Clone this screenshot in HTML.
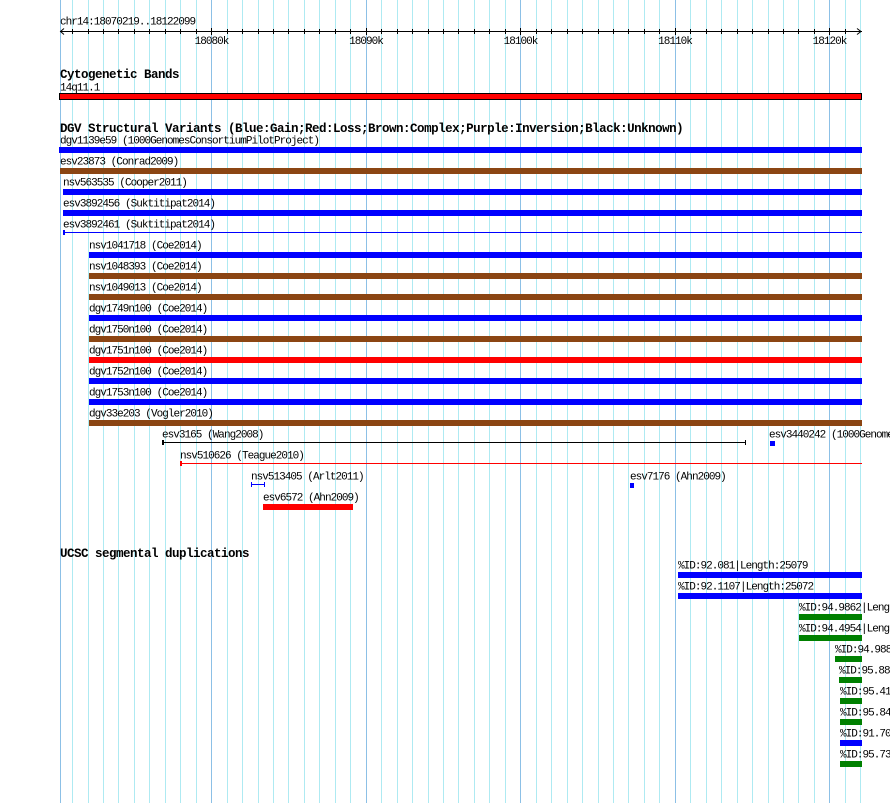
<!DOCTYPE html>
<html><head><meta charset="utf-8"><style>
html,body{margin:0;padding:0;background:#fff;width:890px;height:803px;overflow:hidden}
svg{display:block}
text{font-family:"Liberation Mono","DejaVu Sans Mono",monospace;font-size:11px;letter-spacing:-0.97px;fill:#000}
.h{font-weight:bold;font-size:12.5px;letter-spacing:-0.5px}
</style></head><body>
<svg width="890" height="803" viewBox="0 0 890 803" shape-rendering="crispEdges">
<g stroke="#aeeaf2" stroke-width="1">
<line x1="72.5" y1="0" x2="72.5" y2="803"/><line x1="88.5" y1="0" x2="88.5" y2="803"/><line x1="103.5" y1="0" x2="103.5" y2="803"/><line x1="118.5" y1="0" x2="118.5" y2="803"/><line x1="134.5" y1="0" x2="134.5" y2="803"/><line x1="149.5" y1="0" x2="149.5" y2="803"/><line x1="165.5" y1="0" x2="165.5" y2="803"/><line x1="180.5" y1="0" x2="180.5" y2="803"/><line x1="196.5" y1="0" x2="196.5" y2="803"/>
<line x1="227.5" y1="0" x2="227.5" y2="803"/><line x1="242.5" y1="0" x2="242.5" y2="803"/><line x1="258.5" y1="0" x2="258.5" y2="803"/><line x1="273.5" y1="0" x2="273.5" y2="803"/><line x1="288.5" y1="0" x2="288.5" y2="803"/><line x1="304.5" y1="0" x2="304.5" y2="803"/><line x1="319.5" y1="0" x2="319.5" y2="803"/><line x1="335.5" y1="0" x2="335.5" y2="803"/><line x1="350.5" y1="0" x2="350.5" y2="803"/>
<line x1="381.5" y1="0" x2="381.5" y2="803"/><line x1="397.5" y1="0" x2="397.5" y2="803"/><line x1="412.5" y1="0" x2="412.5" y2="803"/><line x1="428.5" y1="0" x2="428.5" y2="803"/><line x1="443.5" y1="0" x2="443.5" y2="803"/><line x1="458.5" y1="0" x2="458.5" y2="803"/><line x1="474.5" y1="0" x2="474.5" y2="803"/><line x1="489.5" y1="0" x2="489.5" y2="803"/><line x1="505.5" y1="0" x2="505.5" y2="803"/>
<line x1="536.5" y1="0" x2="536.5" y2="803"/><line x1="551.5" y1="0" x2="551.5" y2="803"/><line x1="567.5" y1="0" x2="567.5" y2="803"/><line x1="582.5" y1="0" x2="582.5" y2="803"/><line x1="598.5" y1="0" x2="598.5" y2="803"/><line x1="613.5" y1="0" x2="613.5" y2="803"/><line x1="628.5" y1="0" x2="628.5" y2="803"/><line x1="644.5" y1="0" x2="644.5" y2="803"/><line x1="659.5" y1="0" x2="659.5" y2="803"/>
<line x1="690.5" y1="0" x2="690.5" y2="803"/><line x1="706.5" y1="0" x2="706.5" y2="803"/><line x1="721.5" y1="0" x2="721.5" y2="803"/><line x1="737.5" y1="0" x2="737.5" y2="803"/><line x1="752.5" y1="0" x2="752.5" y2="803"/><line x1="768.5" y1="0" x2="768.5" y2="803"/><line x1="783.5" y1="0" x2="783.5" y2="803"/><line x1="798.5" y1="0" x2="798.5" y2="803"/><line x1="814.5" y1="0" x2="814.5" y2="803"/>
<line x1="845.5" y1="0" x2="845.5" y2="803"/><line x1="860.5" y1="0" x2="860.5" y2="803"/>
</g>
<g stroke="#8cc0e6" stroke-width="1">
<line x1="60.5" y1="0" x2="60.5" y2="803"/><line x1="211.5" y1="0" x2="211.5" y2="803"/><line x1="366.5" y1="0" x2="366.5" y2="803"/><line x1="520.5" y1="0" x2="520.5" y2="803"/><line x1="675.5" y1="0" x2="675.5" y2="803"/><line x1="829.5" y1="0" x2="829.5" y2="803"/>
</g>
<text x="60" y="24.5">chr14:18070219..18122099</text>
<g stroke="#000">
<line x1="60" y1="31.5" x2="862" y2="31.5"/>
<polyline points="64,28.5 60.5,31.5 64,34.5" fill="none" shape-rendering="auto"/>
<polyline points="857,28.5 861,31.5 857,34.5" fill="none" shape-rendering="auto"/>
<path d="M72.5 29v5M88.5 29v5M103.5 29v5M118.5 29v5M134.5 29v5M149.5 29v5M165.5 29v5M180.5 29v5M196.5 29v5M211.5 28v7M227.5 29v5M242.5 29v5M258.5 29v5M273.5 29v5M288.5 29v5M304.5 29v5M319.5 29v5M335.5 29v5M350.5 29v5M366.5 28v7M381.5 29v5M397.5 29v5M412.5 29v5M428.5 29v5M443.5 29v5M458.5 29v5M474.5 29v5M489.5 29v5M505.5 29v5M520.5 28v7M536.5 29v5M551.5 29v5M567.5 29v5M582.5 29v5M598.5 29v5M613.5 29v5M628.5 29v5M644.5 29v5M659.5 29v5M675.5 28v7M690.5 29v5M706.5 29v5M721.5 29v5M737.5 29v5M752.5 29v5M768.5 29v5M783.5 29v5M798.5 29v5M814.5 29v5M829.5 28v7M845.5 29v5"/>
</g>
<g text-anchor="middle">
<text x="211.5" y="44">18080k</text><text x="366" y="44">18090k</text><text x="520.5" y="44">18100k</text><text x="675" y="44">18110k</text><text x="829.5" y="44">18120k</text>
</g>
<text class="h" x="60" y="78">Cytogenetic Bands</text>
<text x="60" y="90.5">14q11.1</text>
<rect x="59.5" y="93.5" width="802" height="6" fill="#f00" stroke="#000"/>
<text class="h" x="60" y="132">DGV Structural Variants (Blue:Gain;Red:Loss;Brown:Complex;Purple:Inversion;Black:Unknown)</text>
<text x="60" y="143.5">dgv1139e59 (1000GenomesConsortiumPilotProject)</text>
<rect x="59" y="147" width="803" height="6" fill="#00f"/>
<text x="60" y="164.5">esv23873 (Conrad2009)</text>
<rect x="60" y="168" width="802" height="6" fill="#8b4513"/>
<text x="63" y="185.5">nsv563535 (Cooper2011)</text>
<rect x="63" y="189" width="799" height="6" fill="#00f"/>
<text x="63" y="206.5">esv3892456 (Suktitipat2014)</text>
<rect x="63" y="210" width="799" height="6" fill="#00f"/>
<text x="63" y="227.5">esv3892461 (Suktitipat2014)</text>
<rect x="63" y="232" width="799" height="1" fill="#00f"/><rect x="63" y="230" width="2" height="5" fill="#00f"/>
<text x="89" y="248.5">nsv1041718 (Coe2014)</text>
<rect x="89" y="252" width="773" height="6" fill="#00f"/>
<text x="89" y="269.5">nsv1048393 (Coe2014)</text>
<rect x="89" y="273" width="773" height="6" fill="#8b4513"/>
<text x="89" y="290.5">nsv1049013 (Coe2014)</text>
<rect x="89" y="294" width="773" height="6" fill="#8b4513"/>
<text x="89" y="311.5">dgv1749n100 (Coe2014)</text>
<rect x="89" y="315" width="773" height="6" fill="#00f"/>
<text x="89" y="332.5">dgv1750n100 (Coe2014)</text>
<rect x="89" y="336" width="773" height="6" fill="#8b4513"/>
<text x="89" y="353.5">dgv1751n100 (Coe2014)</text>
<rect x="89" y="357" width="773" height="6" fill="#f00"/>
<text x="89" y="374.5">dgv1752n100 (Coe2014)</text>
<rect x="89" y="378" width="773" height="6" fill="#00f"/>
<text x="89" y="395.5">dgv1753n100 (Coe2014)</text>
<rect x="89" y="399" width="773" height="6" fill="#00f"/>
<text x="89" y="416.5">dgv33e203 (Vogler2010)</text>
<rect x="89" y="420" width="773" height="6" fill="#8b4513"/>
<text x="162" y="437.5">esv3165 (Wang2008)</text>
<rect x="162" y="442" width="584" height="1" fill="#000"/><rect x="162" y="440" width="2" height="5" fill="#000"/><rect x="745" y="440" width="1" height="5" fill="#000"/>
<text x="769" y="437.5">esv3440242 (1000Genomes</text>
<rect x="770" y="441" width="5" height="5" fill="#00f"/>
<text x="180" y="458.5">nsv510626 (Teague2010)</text>
<rect x="180" y="463" width="682" height="1" fill="#f00"/><rect x="180" y="461" width="2" height="5" fill="#f00"/>
<text x="251" y="479.5">nsv513405 (Arlt2011)</text>
<rect x="251" y="484" width="14" height="1" fill="#00f"/><rect x="251" y="482" width="1" height="5" fill="#00f"/><rect x="264" y="482" width="1" height="5" fill="#00f"/>
<text x="630" y="479.5">esv7176 (Ahn2009)</text>
<rect x="630" y="483" width="4" height="5" fill="#00f"/>
<text x="263" y="500.5">esv6572 (Ahn2009)</text>
<rect x="263" y="504" width="90" height="6" fill="#f00"/>
<text class="h" x="60" y="557">UCSC segmental duplications</text>
<text x="678" y="568.5">%ID:92.081|Length:25079</text>
<rect x="678" y="572" width="184" height="6" fill="#00f"/>
<text x="678" y="589.5">%ID:92.1107|Length:25072</text>
<rect x="678" y="593" width="184" height="6" fill="#00f"/>
<text x="799" y="610.5">%ID:94.9862|Length:6500</text>
<rect x="799" y="614" width="63" height="6" fill="#008000"/>
<text x="799" y="631.5">%ID:94.4954|Length:6500</text>
<rect x="799" y="635" width="63" height="6" fill="#008000"/>
<text x="835" y="652.5">%ID:94.988</text>
<rect x="835" y="656" width="27" height="6" fill="#008000"/>
<text x="839" y="673.5">%ID:95.88</text>
<rect x="839" y="677" width="23" height="6" fill="#008000"/>
<text x="840" y="694.5">%ID:95.41</text>
<rect x="840" y="698" width="22" height="6" fill="#008000"/>
<text x="840" y="715.5">%ID:95.84</text>
<rect x="840" y="719" width="22" height="6" fill="#008000"/>
<text x="840" y="736.5">%ID:91.70</text>
<rect x="840" y="740" width="22" height="6" fill="#00f"/>
<text x="840" y="757.5">%ID:95.73</text>
<rect x="840" y="761" width="22" height="6" fill="#008000"/>
</svg>
</body></html>
